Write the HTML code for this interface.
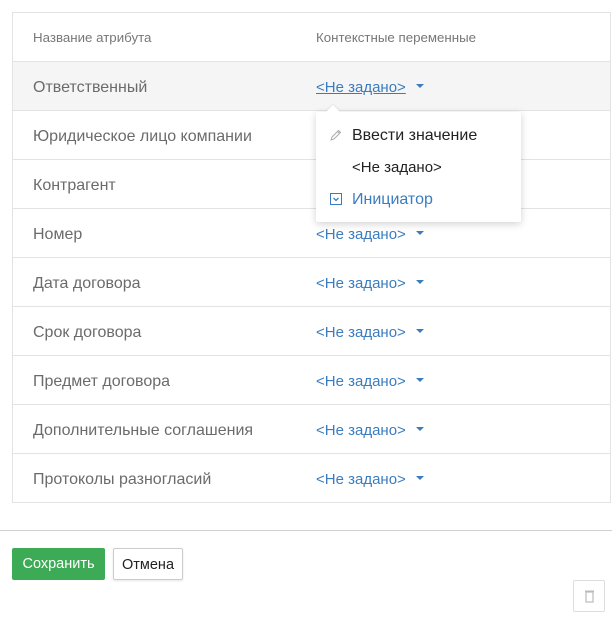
<!DOCTYPE html>
<html><head><meta charset="utf-8"><style>
*{box-sizing:border-box}
body{margin:0;width:612px;height:618px;background:#fff;font-family:"Liberation Sans","DejaVu Sans",sans-serif;position:relative;overflow:hidden}
.tbl{position:absolute;left:12px;top:12px;width:599px;height:491px;border:1px solid #e3e3e3}
.row{position:absolute;left:0;width:597px;height:49px;border-top:1px solid #e3e3e3}
.row .a{position:absolute;left:20px;top:17px;font-size:16px;color:#6b6b6b}
.row .b{position:absolute;left:303px;top:17px;font-size:15px;color:#3a7cc0}
.caret{display:inline-block;width:0;height:0;border-left:4px solid transparent;border-right:4px solid transparent;border-top:4px solid #3a7cc0;margin-left:10px;vertical-align:middle;position:relative;top:-2px}
.hdr{position:absolute;top:17px;font-size:13.3px;color:#777}
.dd{position:absolute;left:316px;top:112px;width:205px;height:110px;background:#fff;box-shadow:0 2px 8px rgba(0,0,0,.18);border-radius:2px}
.dd:before{content:"";position:absolute;left:12px;top:-5px;width:10px;height:10px;background:#fff;transform:rotate(45deg);box-shadow:-1px -1px 2px rgba(0,0,0,.06)}
.it{position:absolute;left:36px;font-size:16px;color:#222}
.btn{position:absolute;height:32px;border-radius:2px;font-size:14.5px;line-height:32px;text-align:center}
</style></head><body>
<div class="tbl">
<div class="hdr" style="left:20px">Название атрибута</div>
<div class="hdr" style="left:303px">Контекстные переменные</div>
<div class="row" style="top:48px;background:#f5f5f5"><span class="a">Ответственный</span><span class="b"><u>&lt;Не задано&gt;</u><span class="caret"></span></span></div>
<div class="row" style="top:97px"><span class="a">Юридическое лицо компании</span></div>
<div class="row" style="top:146px"><span class="a">Контрагент</span></div>
<div class="row" style="top:195px"><span class="a">Номер</span><span class="b">&lt;Не задано&gt;<span class="caret"></span></span></div>
<div class="row" style="top:244px"><span class="a">Дата договора</span><span class="b">&lt;Не задано&gt;<span class="caret"></span></span></div>
<div class="row" style="top:293px"><span class="a">Срок договора</span><span class="b">&lt;Не задано&gt;<span class="caret"></span></span></div>
<div class="row" style="top:342px"><span class="a">Предмет договора</span><span class="b">&lt;Не задано&gt;<span class="caret"></span></span></div>
<div class="row" style="top:391px"><span class="a">Дополнительные соглашения</span><span class="b">&lt;Не задано&gt;<span class="caret"></span></span></div>
<div class="row" style="top:440px"><span class="a">Протоколы разногласий</span><span class="b">&lt;Не задано&gt;<span class="caret"></span></span></div>
</div>
<div class="dd">
<svg style="position:absolute;left:14px;top:17px" width="12" height="12" viewBox="0 0 12 12"><path d="M1 11 L2 8 L8.5 1.5 L10.5 3.5 L4 10 Z M7.5 2.5 L9.5 4.5" fill="none" stroke="#aaa" stroke-width="1"/></svg>
<div class="it" style="top:15px">Ввести значение</div>
<div class="it" style="top:47px;font-size:15px">&lt;Не задано&gt;</div>
<svg style="position:absolute;left:14px;top:81px" width="12" height="12" viewBox="0 0 12 12"><rect x="0.5" y="0.5" width="11" height="11" fill="none" stroke="#3a7cc0"/><path d="M3.5 5 L6 7.5 L8.5 5" fill="none" stroke="#3a7cc0" stroke-width="1.3"/></svg>
<div class="it" style="top:79px;color:#3a7cc0">Инициатор</div>
</div>
<div style="position:absolute;left:0;top:530px;width:612px;height:1px;background:#d0d0d0"></div>
<div class="btn" style="left:12px;top:548px;width:93px;background:#3dab55;color:#fff">Сохранить</div>
<div class="btn" style="left:113px;top:548px;width:70px;border:1px solid #ccc;color:#222;box-shadow:0 1px 2px rgba(0,0,0,.1)">Отмена</div>
<div class="btn" style="left:573px;top:580px;width:32px;height:32px;border:1px solid #ddd"><svg style="position:absolute;left:11px;top:9px" width="9" height="13" viewBox="0 0 9 13"><rect x="1" y="2" width="7" height="10" fill="none" stroke="#bbb" stroke-width="1.2"/><rect x="0" y="0.5" width="9" height="1.5" fill="#bbb"/></svg></div>
</body></html>
